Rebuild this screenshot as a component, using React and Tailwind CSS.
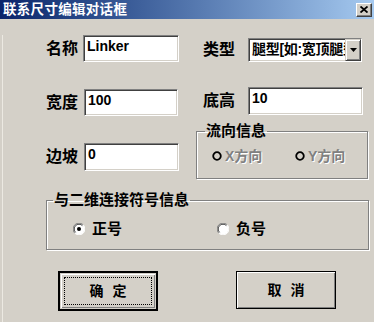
const cjk = "[font-family:'Liberation_Sans','Noto_Sans_CJK_SC',sans-serif]";

const sunken =
  "border border-t-[#808080] border-l-[#808080] border-b-white border-r-white shadow-[inset_1px_1px_0_#404040,inset_-1px_-1px_0_#d4d0c8] bg-white";

const etched =
  "border border-[#808080] shadow-[1px_1px_0_#fff,inset_1px_1px_0_#fff]";

function Field({ label, value, labelW, inputW, inputH, className = "" }) {
  return (
    <div className={`flex items-center ${className}`}>
      <span className={`text-[16px] font-bold leading-[18px] text-black`} style={{ width: labelW }}>
        {label}
      </span>
      <div
        className={`${sunken} pl-[3px] pt-[2px] text-[14px] font-bold leading-[16px] text-black`}
        style={{ width: inputW, height: inputH }}
      >
        {value}
      </div>
    </div>
  );
}

function Radio({ checked }) {
  return (
    <svg width="12" height="12" viewBox="0 0 12 12">
      <circle cx="6" cy="6" r="5.5" fill="#fff" />
      <path d="M1.8 10.2 A5.5 5.5 0 0 1 10.2 1.8" fill="none" stroke="#808080" strokeWidth="1" />
      <path d="M2.6 9.4 A4.5 4.5 0 0 1 9.4 2.6" fill="none" stroke="#404040" strokeWidth="1" />
      <path d="M10.2 1.8 A5.5 5.5 0 0 1 1.8 10.2" fill="none" stroke="#fff" strokeWidth="1" />
      {checked && <circle cx="6" cy="6" r="2" fill="#000" />}
    </svg>
  );
}

function DisabledRadio() {
  return (
    <svg width="10" height="10" viewBox="0 0 10 10">
      <circle cx="5" cy="5" r="3.8" fill="none" stroke="#000" strokeWidth="1.8" />
    </svg>
  );
}

export default function App() {
  return (
    <div className={`w-[374px] h-[322px] overflow-hidden bg-[#d4d0c8] ${cjk}`}>
      {/* title bar */}
      <div className="h-[19px] flex items-center justify-between bg-gradient-to-r from-[#0a246a] to-[#a6caf0] pl-[3px] pr-[2px]">
        <span className="text-white text-[13.5px] font-bold leading-[15px] tracking-[0.3px]">联系尺寸编辑对话框</span>
        <div className="w-[16px] h-[14px] bg-[#d4d0c8] border border-t-white border-l-white border-b-[#404040] border-r-[#404040] shadow-[inset_-1px_-1px_0_#808080] flex items-center justify-center">
          <svg width="8" height="7" viewBox="0 0 8 7">
            <path d="M0.5 0.5 L7.5 6.5 M7.5 0.5 L0.5 6.5" stroke="#000" strokeWidth="1.8" />
          </svg>
        </div>
      </div>

      <div className="border-l border-[#ece9e2] ml-[2px] h-[303px]">
        {/* row 1 */}
        <div className="flex items-end h-[27px] mt-[16px]">
          <Field className="ml-[43px]" label="名称" value="Linker" labelW={37} inputW={96} inputH={27} />
          <div className="flex items-center ml-[24px]">
            <span className="w-[45px] text-[16px] font-bold leading-[18px]">类型</span>
            <div className={`${sunken} w-[114px] h-[24px] flex items-stretch`}>
              <div className="flex-1 overflow-hidden whitespace-nowrap pl-[3px] text-[14px] font-bold leading-[20px] tracking-[-0.3px]">
                腿型[如:宽顶腿型]
              </div>
              <div className="w-[16px] bg-[#d4d0c8] border border-t-[#d4d0c8] border-l-[#d4d0c8] border-b-[#404040] border-r-[#404040] shadow-[inset_1px_1px_0_#fff,inset_-1px_-1px_0_#808080] flex items-center justify-center">
                <svg width="7" height="4" viewBox="0 0 7 4">
                  <path d="M0 0 H7 L3.5 4 Z" fill="#000" />
                </svg>
              </div>
            </div>
          </div>
        </div>

        {/* row 2 */}
        <div className="flex h-[29px] mt-[25px]">
          <Field className="ml-[43px] self-end" label="宽度" value="100" labelW={38} inputW={94} inputH={27} />
          <Field className="ml-[25px] self-start" label="底高" value="10" labelW={45} inputW={115} inputH={28} />
        </div>

        {/* row 3 */}
        <div className="flex items-start mt-[7px]">
          <Field className="ml-[43px] mt-[20px]" label="边坡" value="0" labelW={38} inputW={95} inputH={28} />
          <fieldset className={`${etched} ml-[17px] w-[172px] h-[56px]`}>
            <legend className="ml-[8px] px-[1px] text-[15px] font-bold leading-[16px]">流向信息</legend>
            <div className="flex items-center pl-[15px] pt-[9px] text-[14px] font-bold leading-[16px] text-[#808080] [text-shadow:1px_1px_0_#fff]">
              <div className="w-[83px] flex items-center gap-[3px]">
                <DisabledRadio />
                <span>X方向</span>
              </div>
              <div className="flex items-center gap-[3px]">
                <DisabledRadio />
                <span>Y方向</span>
              </div>
            </div>
          </fieldset>
        </div>

        {/* row 4 */}
        <fieldset className={`${etched} ml-[43px] mt-[13px] w-[323px] h-[58px]`}>
          <legend className="ml-[6px] px-[1px] text-[15px] font-bold leading-[16px]">与二维连接符号信息</legend>
          <div className="flex items-center pl-[26px] pt-[13px] text-[15px] font-bold leading-[16px]">
            <div className="w-[144px] flex items-center gap-[7px]">
              <Radio checked />
              <span>正号</span>
            </div>
            <div className="flex items-center gap-[7px]">
              <Radio />
              <span>负号</span>
            </div>
          </div>
        </fieldset>

        {/* buttons */}
        <div className="flex items-start mt-[21px]">
          <div className="ml-[55px] w-[100px] h-[40px] border-2 border-black p-[1px] flex">
            <div className="flex-1 shadow-[inset_1px_1px_0_#fff,inset_-1px_-1px_0_#808080] p-[3px] flex">
              <div className="flex-1 border border-dotted border-black flex items-center justify-center gap-[9px] text-[14px] font-bold">
                <span>确</span>
                <span>定</span>
              </div>
            </div>
          </div>
          <div className="ml-[78px] w-[100px] h-[38px] border border-black shadow-[inset_1px_1px_0_#fff,inset_-1px_-1px_0_#808080] flex items-center justify-center gap-[9px] text-[14px] font-bold">
            <span>取</span>
            <span>消</span>
          </div>
        </div>
      </div>
    </div>
  );
}
